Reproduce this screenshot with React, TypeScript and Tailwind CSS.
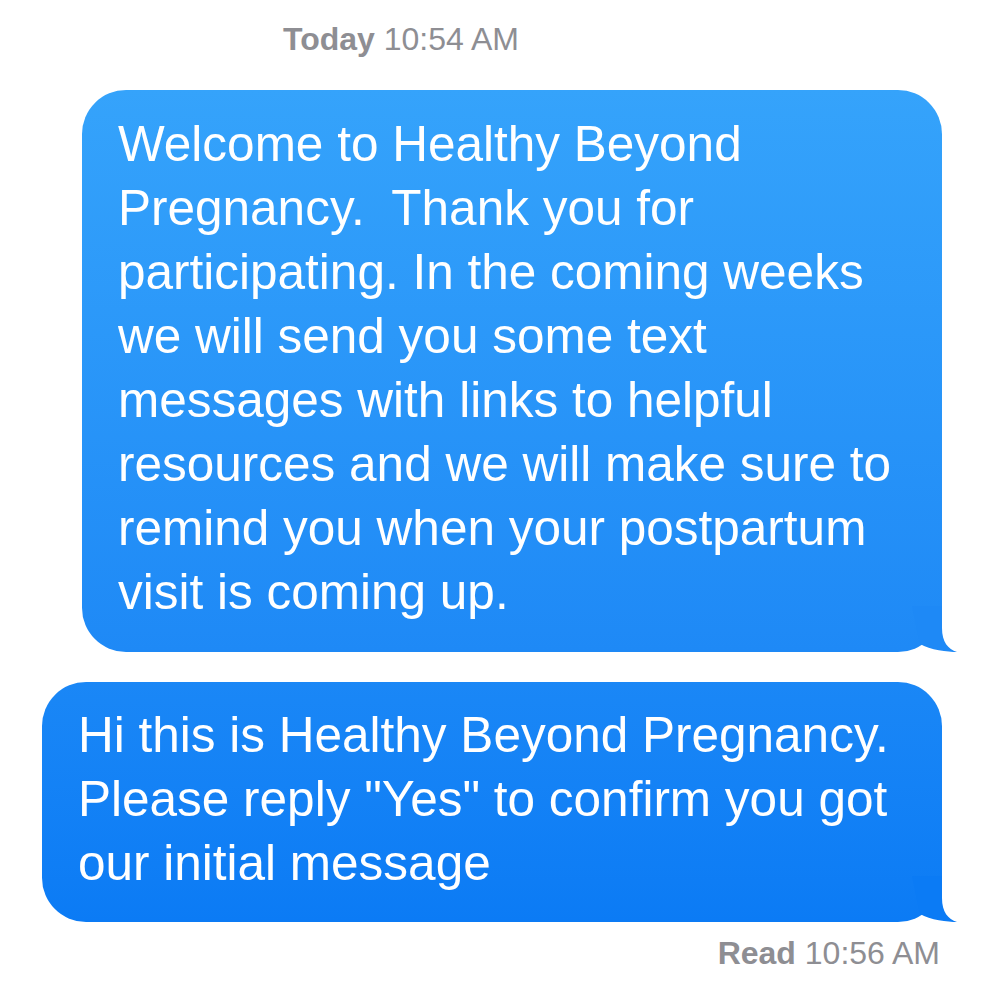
import React from 'react'

function Tail({ color }: { color: string }) {
  return (
    <svg
      className="absolute bottom-0 right-[-16px]"
      width="46"
      height="46"
      viewBox="-30 -46 46 46"
    >
      <path
        d="M0 -46 L0 -24 C0 -10 6 -3 15 0 C6 0 -12 -2 -22 -8 L-30 -46 Z"
        fill={color}
      />
    </svg>
  )
}

function Bubble({
  lines,
  className,
  tail,
}: {
  lines: string[]
  className: string
  tail: string
}) {
  return (
    <div className={`relative rounded-[44px] text-white ${className}`}>
      <div className="text-[49.5px] leading-[64px] whitespace-pre">
        {lines.map((l, i) => (
          <div key={i}>{l}</div>
        ))}
      </div>
      <Tail color={tail} />
    </div>
  )
}

export default function App() {
  return (
    <div
      className="flex min-h-[1000px] w-[1000px] flex-col bg-white"
      style={{ fontFamily: '"Liberation Sans", Arial, sans-serif' }}
    >
      <div className="pl-[283px] pt-[19px] text-[32px] leading-[40px] text-[#8e8e93]">
        <span className="font-bold">Today</span> 10:54 AM
      </div>

      <div className="mt-[31px] flex flex-col items-end pr-[58px]">
        <Bubble
          className="w-[860px] bg-gradient-to-b from-[#35a3fb] to-[#1e89f6] pl-[36px] pt-[22px] pb-[28px]"
          tail="#1e89f6"
          lines={[
            'Welcome to Healthy Beyond',
            'Pregnancy.  Thank you for',
            'participating. In the coming weeks',
            'we will send you some text',
            'messages with links to helpful',
            'resources and we will make sure to',
            'remind you when your postpartum',
            'visit is coming up.',
          ]}
        />
        <Bubble
          className="mt-[30px] w-[900px] bg-gradient-to-b from-[#1a87f6] to-[#0b7bf5] pl-[36px] pt-[21px] pb-[27px]"
          tail="#0b7bf5"
          lines={[
            'Hi this is Healthy Beyond Pregnancy.',
            'Please reply "Yes" to confirm you got',
            'our initial message',
          ]}
        />
      </div>

      <div className="mt-[11px] pr-[60px] text-right text-[32px] leading-[40px] text-[#8e8e93]">
        <span className="font-bold">Read</span> 10:56 AM
      </div>
    </div>
  )
}
